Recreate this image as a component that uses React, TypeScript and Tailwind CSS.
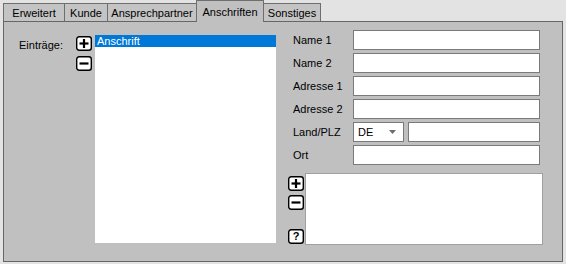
import React from "react";

const tabs = [
  { label: "Erweitert", w: "w-[62px]" },
  { label: "Kunde", w: "w-[44px]" },
  { label: "Ansprechpartner", w: "w-[90px]" },
  { label: "Anschriften", w: "w-[68px]", active: true },
  { label: "Sonstiges", w: "w-[58px]" },
];

const fields = ["Name 1", "Name 2", "Adresse 1", "Adresse 2"];

const SmallButton = ({ kind }: { kind: "plus" | "minus" | "help" }) => (
  <div className="relative w-[16px] h-[15px]">
    <svg width="16" height="15" viewBox="0 0 16 15" className="absolute inset-0">
      <rect x="0.7" y="0.7" width="14.6" height="13.6" rx="2.5" fill="#fff" stroke="#000" strokeWidth="1.4" />
      {kind !== "help" && <path d="M3.5 7.5h9" stroke="#000" strokeWidth="2.2" />}
      {kind === "plus" && <path d="M8 3v9" stroke="#000" strokeWidth="2.2" />}
    </svg>
    {kind === "help" && (
      <span className="absolute inset-0 flex items-center justify-center text-[11px] font-bold leading-none text-black">?</span>
    )}
  </div>
);

const TextBox = ({ w = "w-[187px]" }: { w?: string }) => (
  <div className={`${w} h-[20px] bg-white border border-[#7a7a7a]`} />
);

export default function App() {
  return (
    <div className="w-[566px] h-[264px] bg-[#e3e3e3] font-['Liberation_Sans',Arial,sans-serif] text-[11px] leading-[13px] text-black overflow-hidden">
      {/* Tabs */}
      <div className="flex items-end h-[21px] pl-[3px]">
        {tabs.map((t, i) => (
          <div
            key={t.label}
            className={`${t.w} ${i > 0 ? "-ml-px" : ""} flex justify-center border-t border-l border-r border-[#6e6e6e] ${
              t.active
                ? "relative z-10 h-[22px] -mb-px bg-[#c0c0c0] pt-[5px]"
                : "h-[18px] bg-[#c4c4c4] pt-[3px]"
            }`}
          >
            {t.label}
          </div>
        ))}
      </div>

      {/* Panel */}
      <div className="ml-[3px] w-[560px] h-[241px] border border-[#666] bg-[#c0c0c0] flex">
        {/* Left: entries */}
        <div className="flex pt-[13px] pl-[15px]">
          <div className="w-[57px] pt-[4px]">Einträge:</div>
          <div className="flex flex-col gap-[5px] pt-[1px]">
            <SmallButton kind="plus" />
            <SmallButton kind="minus" />
          </div>
          <div className="ml-[3px] w-[181px] h-[208px] bg-white">
            <div className="h-[12px] bg-[#0078d7] text-white pl-[2px] leading-[12px]">Anschrift</div>
          </div>
        </div>

        {/* Right: address form */}
        <div className="ml-[12px] flex flex-col pt-[8px]">
          <div className="flex flex-col gap-[3px] pl-[5px]">
            {fields.map((f) => (
              <div key={f} className="flex items-center h-[20px]">
                <div className="w-[60px]">{f}</div>
                <TextBox />
              </div>
            ))}
            <div className="flex items-center h-[20px]">
              <div className="w-[60px]">Land/PLZ</div>
              <div className="w-[51px] h-[20px] bg-white border border-[#7a7a7a] flex items-center pl-[4px] pr-[7px]">
                <span className="flex-1">DE</span>
                <svg width="7" height="4" viewBox="0 0 7 4">
                  <path d="M0 0h7L3.5 4z" fill="#6d6d6d" />
                </svg>
              </div>
              <div className="ml-[4px]">
                <TextBox w="w-[132px]" />
              </div>
            </div>
            <div className="flex items-center h-[20px]">
              <div className="w-[60px]">Ort</div>
              <TextBox />
            </div>
          </div>

          <div className="flex mt-[8px] h-[72px]">
            <div className="flex flex-col w-[16px] pt-[3px] pb-[1px]">
              <SmallButton kind="plus" />
              <div className="mt-[4px]">
                <SmallButton kind="minus" />
              </div>
              <div className="mt-auto">
                <SmallButton kind="help" />
              </div>
            </div>
            <div className="ml-[1px] w-[238px] h-[72px] bg-white border border-[#a0a0a0]" />
          </div>
        </div>
      </div>
    </div>
  );
}
